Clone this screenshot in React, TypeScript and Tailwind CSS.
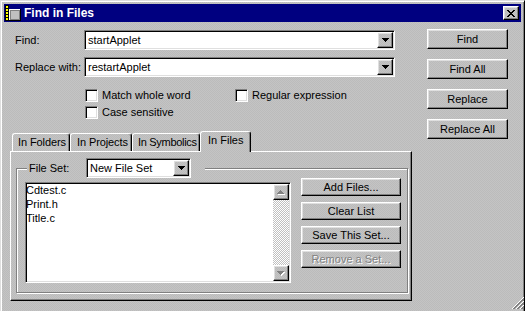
import React from "react";

// dithered grey used for the dialog surfaces
const tex =
  "bg-[#c0c0c0] bg-[image:repeating-conic-gradient(#c4c4c4_0%_25%,#bbbbbb_0%_50%)] bg-size-[2px_2px] bg-fixed";
const raised =
  "border border-t-white border-l-white border-r-black border-b-black shadow-[inset_-1px_-1px_0_#808080,inset_1px_1px_0_#dfdfdf]";
const sunken =
  "border border-t-[#808080] border-l-[#808080] border-r-white border-b-white shadow-[inset_1px_1px_0_#000,inset_-1px_-1px_0_#dfdfdf]";

const DownArrow = () => (
  <svg width="7" height="4" viewBox="0 0 7 4" shapeRendering="crispEdges">
    <rect x="0" y="0" width="7" height="1" fill="#000" />
    <rect x="1" y="1" width="5" height="1" fill="#000" />
    <rect x="2" y="2" width="3" height="1" fill="#000" />
    <rect x="3" y="3" width="1" height="1" fill="#000" />
  </svg>
);

// greyed-out arrow for the disabled scroll buttons
const DimArrow = ({ up }: { up?: boolean }) => {
  const rows = up
    ? [[3, 0, 1], [2, 1, 3], [1, 2, 5], [0, 3, 7]]
    : [[0, 0, 7], [1, 1, 5], [2, 2, 3], [3, 3, 1]];
  return (
    <svg width="8" height="5" viewBox="0 0 8 5" shapeRendering="crispEdges">
      {rows.map(([x, y, w]) => (
        <rect key={"w" + y} x={x + 1} y={y + 1} width={w} height="1" fill="#fff" />
      ))}
      {rows.map(([x, y, w]) => (
        <rect key={"g" + y} x={x} y={y} width={w} height="1" fill="#808080" />
      ))}
    </svg>
  );
};

const Combo = ({ value, className = "" }: { value: string; className?: string }) => (
  <div className={`${sunken} bg-white flex items-center ${className}`}>
    <span className="flex-1 pl-[3px] whitespace-nowrap overflow-hidden">{value}</span>
    <div className={`${raised} ${tex} w-[16px] h-[16px] mr-px flex items-center justify-center`}>
      <DownArrow />
    </div>
  </div>
);

const Btn = ({
  children,
  className = "",
  disabled = false,
}: {
  children: React.ReactNode;
  className?: string;
  disabled?: boolean;
}) => (
  <button
    className={`${raised} flex items-center justify-center whitespace-nowrap ${className} ${
      disabled ? "text-[#808080] [text-shadow:1px_1px_0_#fff]" : "text-black"
    }`}
  >
    {children}
  </button>
);

const Check = ({ label, className = "" }: { label: string; className?: string }) => (
  <label className={`flex items-center gap-[4px] ${className}`}>
    <span className={`${sunken} bg-white w-[13px] h-[13px] shrink-0`} />
    <span>{label}</span>
  </label>
);

const tabBase =
  "border-t border-l border-r border-t-white border-l-white border-r-black rounded-t-[3px] shadow-[inset_-1px_0_0_#808080] flex items-center whitespace-nowrap";

export default function App() {
  return (
    <div
      className={`relative w-[525px] h-[311px] ${tex} border border-b-0 border-t-[#dfdfdf] border-l-[#dfdfdf] border-r-black shadow-[inset_1px_1px_0_#fff,inset_-1px_0_0_#808080] px-[3px] pt-[3px] font-['Liberation_Sans',Arial,sans-serif] text-[11px] text-black select-none`}
    >
      {/* title bar */}
      <div className="h-[18px] bg-[#000080] flex items-center pl-px pr-[2px]">
        <svg width="16" height="16" viewBox="0 0 16 16" shapeRendering="crispEdges">
          <rect x="0" y="0" width="4" height="16" fill="#000" />
          {[1, 4, 7, 10, 13].map((y) => (
            <rect key={y} x="1" y={y} width="2" height="2" fill="#ffff00" />
          ))}
          <rect x="4" y="4" width="12" height="12" fill="#000" />
          <rect x="4" y="4" width="11" height="11" fill="#fff" />
          <rect x="5" y="5" width="10" height="10" fill="#808080" />
          <rect x="6" y="6" width="8" height="8" fill="#c0c0c0" />
        </svg>
        <span className="ml-[3px] text-white font-bold text-[12px]">Find in Files</span>
        <div className={`ml-auto w-[16px] h-[14px] ${raised} ${tex} flex items-center justify-center`}>
          <svg width="8" height="7" viewBox="0 0 8 7" shapeRendering="crispEdges">
            <path
              d="M0 0h2v1H0zM6 0h2v1H6zM1 1h2v1H1zM5 1h2v1H5zM2 2h4v1H2zM3 3h2v1H3zM2 4h4v1H2zM1 5h2v1H1zM5 5h2v1H5zM0 6h2v1H0zM6 6h2v1H6z"
              fill="#000"
            />
          </svg>
        </div>
      </div>

      <div className="flex pl-[6px]">
        {/* left side */}
        <div className="w-[402px]">
          <div className="mt-[8px] flex items-center h-[20px]">
            <span className="w-[74px] pl-[5px]">Find:</span>
            <Combo value="startApplet" className="w-[311px] h-[20px]" />
          </div>
          <div className="mt-[7px] flex items-center h-[20px]">
            <span className="w-[74px] pl-[5px]">Replace with:</span>
            <Combo value="restartApplet" className="w-[311px] h-[20px]" />
          </div>

          <div className="mt-[10px] h-[17px] pl-[75px] flex items-center">
            <Check label="Match whole word" className="w-[150px]" />
            <Check label="Regular expression" />
          </div>
          <div className="h-[17px] pl-[75px] flex items-center">
            <Check label="Case sensitive" />
          </div>

          {/* tabs */}
          <div className="mt-[10px] h-[20px] pl-[2px] flex items-end">
            <div className={`${tabBase} h-[18px] w-[58px] pl-[5px] tracking-[-0.1px]`}>In Folders</div>
            <div className={`${tabBase} h-[18px] w-[62px] pl-[6px] tracking-[-0.1px]`}>In Projects</div>
            <div className={`${tabBase} h-[18px] w-[68px] pl-[5px] tracking-[-0.3px]`}>In Symbolics</div>
            <div className={`${tabBase} ${tex} relative z-10 h-[21px] -mb-px w-[51px] pl-[7px] pb-[3px]`}>
              In Files
            </div>
          </div>

          <div className="h-[150px] border border-t-white border-l-white border-r-black border-b-black shadow-[inset_-1px_-1px_0_#808080] pt-[6px] pl-[5px]">
            <fieldset className="w-[392px] h-[135px] m-0 pl-[8px] pr-0 pb-0 pt-0 border border-[#808080] shadow-[inset_1px_1px_0_#fff,1px_1px_0_#fff]">
              <legend className={`ml-[2px] pl-[2px] pr-[14px] p-0 ${tex}`}>
                <div className="flex items-center h-[20px]">
                  <span className="w-[57px]">File Set:</span>
                  <Combo value="New File Set" className="w-[105px] h-[20px]" />
                </div>
              </legend>
              <div className="flex items-start gap-[10px]">
                <div className={`${sunken} bg-white mt-[4px] w-[266px] h-[101px] flex`}>
                  <div className="flex-1 leading-[14px]">
                    <div>Cdtest.c</div>
                    <div>Print.h</div>
                    <div>Title.c</div>
                  </div>
                  <div className="w-[16px] my-px mr-px flex flex-col">
                    <div className={`${raised} ${tex} h-[16px] flex items-center justify-center`}>
                      <DimArrow up />
                    </div>
                    <div className="flex-1 bg-[image:repeating-conic-gradient(#ffffff_0%_25%,#c0c0c0_0%_50%)] bg-size-[2px_2px]" />
                    <div className={`${raised} ${tex} h-[16px] flex items-center justify-center`}>
                      <DimArrow />
                    </div>
                  </div>
                </div>
                <div className="w-[100px] flex flex-col gap-[6px]">
                  <Btn className="h-[18px]">Add Files...</Btn>
                  <Btn className="h-[18px]">Clear List</Btn>
                  <Btn className="h-[18px]">Save This Set...</Btn>
                  <Btn className="h-[18px]" disabled>
                    Remove a Set...
                  </Btn>
                </div>
              </div>
            </fieldset>
          </div>
        </div>

        {/* right buttons */}
        <div className="ml-[15px] w-[81px] mt-[7px] flex flex-col gap-[10px]">
          <Btn className="h-[20px]">Find</Btn>
          <Btn className="h-[20px]">Find All</Btn>
          <Btn className="h-[20px]">Replace</Btn>
          <Btn className="h-[20px]">Replace All</Btn>
        </div>
      </div>

      {/* size grip */}
      <svg className="absolute right-0 bottom-[2px]" width="12" height="12" viewBox="0 0 12 12">
        {[0, 4, 8].map((k) => (
          <g key={k}>
            <path d={`M${k} 12L12 ${k}`} stroke="#fff" />
            <path d={`M${k + 1} 12L12 ${k + 1}`} stroke="#808080" />
            <path d={`M${k + 2} 12L12 ${k + 2}`} stroke="#808080" />
          </g>
        ))}
      </svg>
    </div>
  );
}
